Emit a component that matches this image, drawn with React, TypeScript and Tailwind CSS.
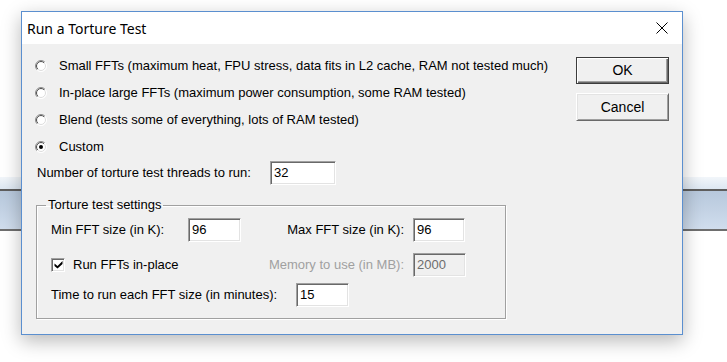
const ui = { fontFamily: '"Liberation Sans", Arial, sans-serif' };

function Radio({ checked }: { checked?: boolean }) {
  return (
    <svg width="12" height="12" viewBox="0 0 12 12" className="shrink-0">
      <defs>
        <linearGradient id="ro" x1="0" y1="0" x2="1" y2="1">
          <stop offset="0.5" stopColor="#8a8a8a" />
          <stop offset="0.5" stopColor="#ffffff" />
        </linearGradient>
        <linearGradient id="ri" x1="0" y1="0" x2="1" y2="1">
          <stop offset="0.5" stopColor="#4a4a4a" />
          <stop offset="0.5" stopColor="#dcdcdc" />
        </linearGradient>
      </defs>
      <circle cx="6" cy="6" r="5.5" fill="#fff" stroke="url(#ro)" />
      <circle cx="6" cy="6" r="4.5" fill="#fff" stroke="url(#ri)" />
      {checked && <circle cx="6" cy="6" r="2" fill="#000" />}
    </svg>
  );
}

function Field({ value, w, disabled }: { value: string; w: string; disabled?: boolean }) {
  return (
    <div
      className={`${w} h-[24px] shrink-0 border border-t-[#a0a0a0] border-l-[#a0a0a0] border-r-white border-b-white shadow-[inset_1px_1px_0_#696969,inset_-1px_-1px_0_#e3e3e3] pl-[3px] flex items-center text-[13px] ${
        disabled ? "bg-[#f0f0f0] text-[#6d6d6d]" : "bg-white text-black"
      }`}
    >
      {value}
    </div>
  );
}

export default function App() {
  return (
    <div className="relative w-[727px] h-[362px] bg-white overflow-hidden" style={ui}>
      {/* desktop window strip behind the dialog */}
      <div className="mt-[177px] h-[12px] bg-gradient-to-b from-[#f2f6fa] to-[#dde7f2]" />
      <div className="h-[2px] bg-[#5e5e5e]" />
      <div className="h-[38px] bg-gradient-to-b from-[#b7c8dc] to-[#d0dded]" />
      <div className="h-[2px] bg-[#6e6e6e]" />

      {/* dialog */}
      <div className="absolute left-[21px] top-[11px] w-[662px] h-[324px] border border-[#5b8fcf] bg-[#f0f0f0] shadow-[0_6px_18px_rgba(0,0,0,0.28)] flex flex-col">
        <div className="h-[32px] bg-white flex items-center justify-between pl-[5px] pr-[14px]">
          <span className="text-[14px] text-black" style={{ fontFamily: '"Noto Sans", sans-serif' }}>
            Run a Torture Test
          </span>
          <svg width="12" height="12" viewBox="0 0 12 12">
            <path d="M0.5 0.5L11.5 11.5M11.5 0.5L0.5 11.5" stroke="#000" strokeWidth="1" />
          </svg>
        </div>

        <div className="flex flex-1 text-[13px] text-black">
          <div className="flex-1 flex flex-col pt-[8px]">
            {[
              "Small FFTs (maximum heat, FPU stress, data fits in L2 cache, RAM not tested much)",
              "In-place large FFTs (maximum power consumption, some RAM tested)",
              "Blend (tests some of everything, lots of RAM tested)",
              "Custom",
            ].map((t, i) => (
              <div key={t} className="h-[27px] flex items-center pl-[13px] gap-[12px] whitespace-nowrap">
                <Radio checked={i === 3} />
                <span>{t}</span>
              </div>
            ))}

            <div className="h-[26px] flex items-center pl-[15px]">
              <span className="w-[233px]">Number of torture test threads to run:</span>
              <Field value="32" w="w-[66px]" />
            </div>

            <fieldset className="mt-[11px] ml-[14px] w-[470px] border border-[#a0a0a0] shadow-[1px_1px_0_#fff,inset_1px_1px_0_#fff] pl-[14px] pt-[5px] pb-[12px]">
              <legend className="-ml-[5px] px-[2px] leading-[16px]">Torture test settings</legend>

              <div className="h-[23px] flex items-center">
                <span className="w-[137px]">Min FFT size (in K):</span>
                <Field value="96" w="w-[53px]" />
                <span className="w-[172px] text-right pr-[9px]">Max FFT size (in K):</span>
                <Field value="96" w="w-[52px]" />
              </div>

              <div className="mt-[12px] h-[23px] flex items-center">
                <div className="w-[190px] flex items-center gap-[8px]">
                  <div className="w-[14px] h-[14px] border border-t-[#a0a0a0] border-l-[#a0a0a0] border-r-white border-b-white shadow-[inset_1px_1px_0_#696969,inset_-1px_-1px_0_#e3e3e3] bg-white flex items-center justify-center">
                    <svg width="9" height="9" viewBox="0 0 9 9">
                      <path d="M0.5 3.5L3.5 6L8.5 1V4L3.5 8.5L0.5 6Z" fill="#000" />
                    </svg>
                  </div>
                  <span>Run FFTs in-place</span>
                </div>
                <span className="w-[172px] text-right pr-[9px] text-[#a0a0a0]">Memory to use (in MB):</span>
                <Field value="2000" w="w-[53px]" disabled />
              </div>

              <div className="mt-[7px] h-[23px] flex items-center">
                <span className="w-[245px]">Time to run each FFT size (in minutes):</span>
                <Field value="15" w="w-[53px]" />
              </div>
            </fieldset>
          </div>

          <div className="w-[93px] mr-[13px] mt-[13px] flex flex-col gap-[9px]">
            <button className="h-[27px] border border-[#3c3c3c] bg-[#f0f0f0] shadow-[inset_1px_1px_0_#fff,inset_-1px_-1px_0_#696969,inset_-2px_-2px_0_#a0a0a0] text-[14px]">
              OK
            </button>
            <button className="h-[28px] border border-t-white border-l-white border-r-[#696969] border-b-[#696969] bg-[#f0f0f0] shadow-[inset_1px_1px_0_#e3e3e3,inset_-1px_-1px_0_#a0a0a0] text-[14px]">
              Cancel
            </button>
          </div>
        </div>
      </div>
    </div>
  );
}
